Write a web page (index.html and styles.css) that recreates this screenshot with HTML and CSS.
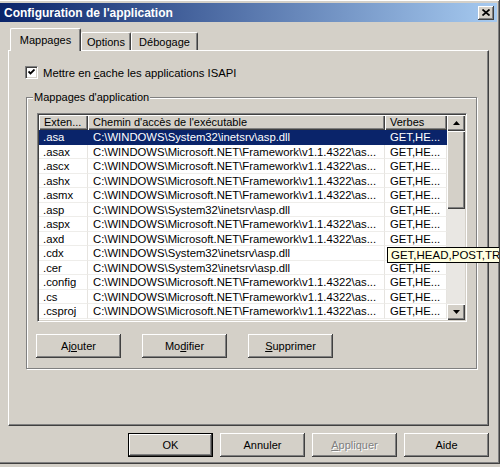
FILE: index.html
```html
<!DOCTYPE html>
<html lang="fr">
<head>
<meta charset="utf-8">
<title>Configuration de l'application</title>
<link rel="stylesheet" href="styles.css">
</head>
<body>
<div class="window">
  <div class="titlebar">
    <span class="title">Configuration de l'application</span>
    <span class="close-btn"><svg width="8" height="7" viewBox="0 0 8 7"><path d="M0.5 0.5 L7.5 6.5 M7.5 0.5 L0.5 6.5" stroke="#000" stroke-width="1.7"/></svg></span>
  </div>
  <div class="tabs-area">
    <div class="tabstrip">
      <div class="tab active t1">Mappages</div>
      <div class="tab t2">Options</div>
      <div class="tab t3">Débogage</div>
    </div>
    <div class="panel">
      <div class="check-row">
        <span class="checkbox"><svg width="7" height="7" viewBox="0 0 7 7"><path d="M0.5 2.5 L2.5 4.5 L6.5 0.5" fill="none" stroke="#000" stroke-width="1.8"/></svg></span>
        <span class="check-label">Mettre en <u>c</u>ache les applications ISAPI</span>
      </div>
      <div class="group">
        <span class="group-label">Mappages d'application</span>
        <div class="listview">
          <div class="table">
            <div class="hrow">
              <div class="hcell">Exten...</div>
              <div class="hcell">Chemin d'accès de l'exécutable</div>
              <div class="hcell">Verbes</div>
            </div>
            <div class="row selected"><div>.asa</div><div>C:\WINDOWS\System32\inetsrv\asp.dll</div><div>GET,HE...</div></div>
            <div class="row"><div>.asax</div><div>C:\WINDOWS\Microsoft.NET\Framework\v1.1.4322\as...</div><div>GET,HE...</div></div>
            <div class="row"><div>.ascx</div><div>C:\WINDOWS\Microsoft.NET\Framework\v1.1.4322\as...</div><div>GET,HE...</div></div>
            <div class="row"><div>.ashx</div><div>C:\WINDOWS\Microsoft.NET\Framework\v1.1.4322\as...</div><div>GET,HE...</div></div>
            <div class="row"><div>.asmx</div><div>C:\WINDOWS\Microsoft.NET\Framework\v1.1.4322\as...</div><div>GET,HE...</div></div>
            <div class="row"><div>.asp</div><div>C:\WINDOWS\System32\inetsrv\asp.dll</div><div>GET,HE...</div></div>
            <div class="row"><div>.aspx</div><div>C:\WINDOWS\Microsoft.NET\Framework\v1.1.4322\as...</div><div>GET,HE...</div></div>
            <div class="row"><div>.axd</div><div>C:\WINDOWS\Microsoft.NET\Framework\v1.1.4322\as...</div><div>GET,HE...</div></div>
            <div class="row"><div>.cdx</div><div>C:\WINDOWS\System32\inetsrv\asp.dll</div><div>GET,HE...</div></div>
            <div class="row"><div>.cer</div><div>C:\WINDOWS\System32\inetsrv\asp.dll</div><div>GET,HE...</div></div>
            <div class="row"><div>.config</div><div>C:\WINDOWS\Microsoft.NET\Framework\v1.1.4322\as...</div><div>GET,HE...</div></div>
            <div class="row"><div>.cs</div><div>C:\WINDOWS\Microsoft.NET\Framework\v1.1.4322\as...</div><div>GET,HE...</div></div>
            <div class="row"><div>.csproj</div><div>C:\WINDOWS\Microsoft.NET\Framework\v1.1.4322\as...</div><div>GET,HE...</div></div>
          </div>
          <div class="scrollbar">
            <div class="sbtn"><svg width="7" height="4" viewBox="0 0 7 4"><path d="M3.5 0 L7 4 L0 4 Z" fill="#000"/></svg></div>
            <div class="thumb"></div>
            <div class="track"></div>
            <div class="sbtn"><svg width="7" height="4" viewBox="0 0 7 4"><path d="M0 0 L7 0 L3.5 4 Z" fill="#000"/></svg></div>
          </div>
        </div>
        <div class="group-buttons">
          <div class="btn">Aj<u>o</u>uter</div>
          <div class="btn">Mo<u>d</u>ifier</div>
          <div class="btn"><u>S</u>upprimer</div>
        </div>
      </div>
    </div>
    <div class="dialog-buttons">
      <div class="btn default">OK</div>
      <div class="btn">Annuler</div>
      <div class="btn disabled"><u>A</u>ppliquer</div>
      <div class="btn">Aide</div>
    </div>
  </div>
  <div class="tooltip">GET,HEAD,POST,TRACE</div>
</div>
</body>
</html>
```

FILE: styles.css
```css
* { box-sizing: border-box; }

body {
  margin: 0;
  background: #D4D0C8;
  font-family: "Liberation Sans", Arial, sans-serif;
  font-size: 11px;
  color: #000;
}

.window {
  position: relative;
  width: 500px;
  height: 464px;
  overflow: hidden;
  display: flex;
  flex-direction: column;
  padding-top: 3px;
  border-right: 1px solid #404040;
  border-bottom: 1px solid #404040;
  box-shadow: inset 0 1px #fff, inset -1px -1px #808080;
}

.titlebar {
  height: 19px;
  margin-right: 2px;
  display: flex;
  align-items: center;
  justify-content: space-between;
  padding: 0 3px 0 4px;
  background: linear-gradient(to right, #0A246A, #A6CAF0);
}

.title {
  color: #fff;
  font-weight: bold;
  font-size: 12px;
}

.close-btn {
  width: 16px;
  height: 14px;
  background: #D4D0C8;
  display: flex;
  align-items: center;
  justify-content: center;
  box-shadow: inset -1px -1px #404040, inset 1px 1px #fff, inset -2px -2px #808080;
}

.tabs-area {
  margin: 6px 10px 0 8px;
  display: flex;
  flex-direction: column;
}

.tabstrip {
  display: flex;
  align-items: flex-end;
  height: 22px;
  padding-left: 2px;
}

.tab {
  height: 18px;
  display: flex;
  align-items: center;
  justify-content: center;
  border-top: 1px solid #fff;
  border-left: 1px solid #fff;
  border-right: 1px solid #404040;
  border-radius: 2px 2px 0 0;
  box-shadow: inset -1px 0 #808080;
  padding-top: 1px;
}

.tab.active {
  height: 23px;
  margin-bottom: -1px;
  position: relative;
  z-index: 1;
  background: #D4D0C8;
  padding-bottom: 2px;
}

.t1 { width: 71px; }
.t2 { width: 50px; }
.t3 { width: 67px; }

.panel {
  height: 376px;
  border-top: 1px solid #fff;
  border-left: 1px solid #fff;
  border-right: 1px solid #404040;
  border-bottom: 1px solid #404040;
  box-shadow: inset -1px -1px #808080;
}

.check-row {
  display: flex;
  align-items: center;
  gap: 5px;
  margin: 15px 0 0 16px;
  height: 13px;
}

.check-label {
  font-size: 11.3px;
}

.checkbox {
  width: 13px;
  height: 13px;
  background: #fff;
  border-top: 1px solid #808080;
  border-left: 1px solid #808080;
  border-right: 1px solid #fff;
  border-bottom: 1px solid #fff;
  box-shadow: inset 1px 1px #404040, inset -1px -1px #D4D0C8;
  display: flex;
  align-items: center;
  justify-content: center;
}

.group {
  position: relative;
  margin: 18px 0 0 17px;
  width: 451px;
  height: 272px;
  border: 1px solid #808080;
  box-shadow: inset 1px 1px #fff, 1px 1px #fff;
  padding: 15px 0 0 10px;
}

.group-label {
  position: absolute;
  top: -7px;
  left: 6px;
  padding: 0 1px;
  line-height: 13px;
  background: #D4D0C8;
}

.listview {
  width: 430px;
  height: 209px;
  display: flex;
  background: #fff;
  border-top: 1px solid #808080;
  border-left: 1px solid #808080;
  border-right: 1px solid #fff;
  border-bottom: 1px solid #fff;
  box-shadow: inset 1px 1px #404040, inset -1px -1px #D4D0C8;
  padding: 1px;
}

.table {
  width: 408px;
}

.hrow, .row {
  display: grid;
  grid-template-columns: 49px 297px 62px;
}

.hcell {
  height: 15px;
  line-height: 14px;
  padding-left: 5px;
  background: #D4D0C8;
  box-shadow: inset 1px 1px #fff, inset -1px -1px #404040, inset -2px -2px #808080;
  white-space: nowrap;
  overflow: hidden;
}

.row {
  height: 14.5px;
}

.row > div {
  line-height: 14px;
  padding-left: 4px;
  white-space: nowrap;
  overflow: hidden;
  border-right: 1px solid #E6E4E0;
  border-bottom: 1px solid #EEEDEA;
  font-size: 11.3px;
}

.row > div:nth-child(2) { padding-left: 5px; }
.row > div:nth-child(3) { padding-left: 5px; }

.row.selected > div {
  background: #0A246A;
  color: #fff;
  border-color: #0A246A;
}

.scrollbar {
  width: 18px;
  display: flex;
  flex-direction: column;
}

.sbtn {
  height: 16px;
  background: #D4D0C8;
  display: flex;
  align-items: center;
  justify-content: center;
  box-shadow: inset 1px 1px #fff, inset -1px -1px #404040, inset -2px -2px #808080;
}

.thumb {
  height: 78px;
  background: #D4D0C8;
  box-shadow: inset 1px 1px #fff, inset -1px -1px #404040, inset -2px -2px #808080;
}

.track {
  flex: 1;
  background: #E9E7E3;
}

.group-buttons {
  display: flex;
  gap: 21px;
  margin: 12px 0 0 -1px;
}

.btn {
  width: 85px;
  height: 24px;
  display: flex;
  align-items: center;
  justify-content: center;
  background: #D4D0C8;
  box-shadow: inset -1px -1px #404040, inset 1px 1px #fff, inset -2px -2px #808080;
}

.btn.default {
  border: 1px solid #000;
}

.btn.disabled {
  color: #808080;
  text-shadow: 1px 1px #fff;
}

.dialog-buttons {
  display: flex;
  justify-content: flex-end;
  gap: 7px;
  margin-top: 7px;
}

.tooltip {
  position: absolute;
  left: 387px;
  top: 247px;
  height: 16px;
  padding: 0 3px;
  line-height: 14px;
  white-space: nowrap;
  background: #FFFFE1;
  border: 1px solid #000;
  font-size: 11.5px;
}
```
